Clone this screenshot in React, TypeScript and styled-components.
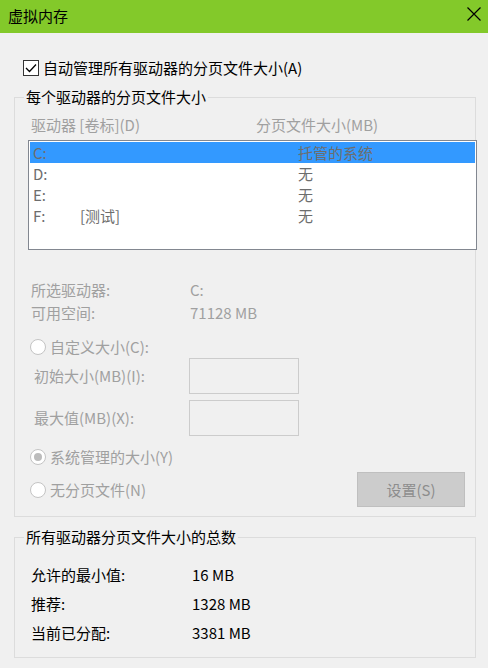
import styled, { createGlobalStyle } from 'styled-components';

const GlobalStyle = createGlobalStyle`
  html, body {
    margin: 0;
    padding: 0;
    background: #f0f0f0;
  }
  body {
    font-family: "Noto Sans CJK SC", "Noto Sans", sans-serif;
    font-size: 15px;
    color: #000;
  }
`;

const disabled = '#a0a0a0';

const Window = styled.div`
  width: 488px;
  height: 668px;
  background: #f0f0f0;
  display: flex;
  flex-direction: column;
  overflow: hidden;
`;

const TitleBar = styled.div`
  height: 33px;
  background: #83c92a;
  display: flex;
  align-items: center;
  justify-content: space-between;
  padding: 0 7px 0 8px;
  box-sizing: border-box;
`;

const Title = styled.span`
  font-size: 15px;
  line-height: 20px;
  margin-top: -1px;
`;

const CloseButton = styled.button`
  border: 0;
  background: none;
  padding: 0;
  width: 14px;
  height: 14px;
  display: flex;
  margin-top: -6px;
`;

const Body = styled.div`
  display: flex;
  flex-direction: column;
  padding: 0 12px 0 14px;
`;

const CheckRow = styled.label`
  display: flex;
  align-items: center;
  gap: 4px;
  height: 20px;
  margin: 25px 0 9px 9px;
  line-height: 20px;
`;

const CheckBox = styled.span`
  width: 16px;
  height: 16px;
  box-sizing: border-box;
  border: 1px solid #333;
  background: #fff;
  display: flex;
  align-items: center;
  justify-content: center;
`;

const Group = styled.fieldset<{ $bottom: number }>`
  margin: 0;
  border: 1px solid #dcdcdc;
  padding: 0 0 ${({ $bottom }) => $bottom}px 13px;
  display: flex;
  flex-direction: column;
  min-width: 0;
  & + & {
    margin-top: 10px;
  }
`;

const Legend = styled.legend`
  margin-left: -4px;
  padding: 0 2px;
  font-size: 15px;
  line-height: 20px;
`;

const HeaderRow = styled.div`
  display: flex;
  height: 20px;
  line-height: 20px;
  margin: 8px 0 5px 3px;
  color: ${disabled};
`;

const HeaderCell = styled.span<{ $w?: number }>`
  width: ${({ $w }) => ($w ? `${$w}px` : 'auto')};
`;

const List = styled.div`
  height: 110px;
  margin-right: -2px;
  box-sizing: border-box;
  border: 1px solid #828790;
  background: #fff;
  padding: 1px;
  display: flex;
  flex-direction: column;
`;

const ListRow = styled.div<{ $selected?: boolean }>`
  height: 21px;
  line-height: 21px;
  display: flex;
  padding-left: 3px;
  color: #6d6d6d;
  background: ${({ $selected }) => ($selected ? '#3399ff' : 'transparent')};
`;

const Cell = styled.span<{ $w?: number }>`
  width: ${({ $w }) => ($w ? `${$w}px` : 'auto')};
  flex-shrink: 0;
`;

const InfoRow = styled.div<{ $top: number }>`
  display: flex;
  height: 20px;
  line-height: 20px;
  margin: ${({ $top }) => $top}px 0 0 3px;
  color: ${disabled};
`;

const InfoLabel = styled.span`
  width: 159px;
`;

const RadioRow = styled.label<{ $top: number }>`
  display: flex;
  align-items: center;
  gap: 4px;
  height: 20px;
  line-height: 20px;
  margin: ${({ $top }) => $top}px 0 0 2px;
  color: ${disabled};
`;

const Radio = styled.span<{ $checked?: boolean }>`
  width: 16px;
  height: 16px;
  box-sizing: border-box;
  border-radius: 50%;
  border: 1px solid #c4c4c4;
  background: #fff;
  display: flex;
  align-items: center;
  justify-content: center;
  &::after {
    content: '';
    width: 8px;
    height: 8px;
    border-radius: 50%;
    background: ${({ $checked }) => ($checked ? '#bcbcbc' : 'transparent')};
  }
`;

const FieldRow = styled.div<{ $top: number }>`
  display: flex;
  align-items: center;
  margin: ${({ $top }) => $top}px 0 0 6px;
  color: ${disabled};
`;

const FieldLabel = styled.span`
  width: 155px;
  line-height: 20px;
`;

const SizeBox = styled.div`
  width: 110px;
  height: 36px;
  box-sizing: border-box;
  border: 1px solid #cccccc;
  background: #f0f0f0;
`;

const BottomRow = styled.div`
  display: flex;
  align-items: center;
  justify-content: space-between;
  margin-top: 5px;
  padding-right: 10px;
`;

const SetButton = styled.button`
  width: 108px;
  height: 35px;
  box-sizing: border-box;
  border: 1px solid #bfbfbf;
  background: #cccccc;
  color: #8d8d8d;
  font-family: inherit;
  font-size: 15px;
  padding: 0;
`;

const TotalRow = styled.div<{ $top: number }>`
  display: flex;
  height: 21px;
  line-height: 21px;
  margin: ${({ $top }) => $top}px 0 0 3px;
`;

const TotalLabel = styled.span`
  width: 161px;
`;

const drives = [
  { name: 'C:', label: '', size: '托管的系统', selected: true },
  { name: 'D:', label: '', size: '无' },
  { name: 'E:', label: '', size: '无' },
  { name: 'F:', label: '[测试]', size: '无' },
];

const totals = [
  { label: '允许的最小值:', value: '16 MB', top: 17 },
  { label: '推荐:', value: '1328 MB', top: 8 },
  { label: '当前已分配:', value: '3381 MB', top: 8 },
];

export default function App() {
  return (
    <>
      <GlobalStyle />
      <Window>
        <TitleBar>
          <Title>虚拟内存</Title>
          <CloseButton aria-label="关闭">
            <svg width="14" height="14" viewBox="0 0 14 14">
              <path d="M0.5 0.5 L13.5 13.5 M13.5 0.5 L0.5 13.5" stroke="#000" strokeWidth="1.2" fill="none" />
            </svg>
          </CloseButton>
        </TitleBar>
        <Body>
          <CheckRow>
            <CheckBox>
              <svg width="12" height="10" viewBox="0 0 12 10">
                <path d="M1 5 L4.5 8.5 L11 1.5" stroke="#000" strokeWidth="1.3" fill="none" />
              </svg>
            </CheckBox>
            自动管理所有驱动器的分页文件大小(A)
          </CheckRow>

          <Group $bottom={9}>
            <Legend>每个驱动器的分页文件大小</Legend>
            <HeaderRow>
              <HeaderCell $w={225}>驱动器 [卷标](D)</HeaderCell>
              <HeaderCell>分页文件大小(MB)</HeaderCell>
            </HeaderRow>
            <List>
              {drives.map((d) => (
                <ListRow key={d.name} $selected={d.selected}>
                  <Cell $w={47}>{d.name}</Cell>
                  <Cell $w={218}>{d.label}</Cell>
                  <Cell>{d.size}</Cell>
                </ListRow>
              ))}
            </List>
            <InfoRow $top={30}>
              <InfoLabel>所选驱动器:</InfoLabel>
              <span>C:</span>
            </InfoRow>
            <InfoRow $top={3}>
              <InfoLabel>可用空间:</InfoLabel>
              <span>71128 MB</span>
            </InfoRow>
            <RadioRow $top={14}>
              <Radio />
              自定义大小(C):
            </RadioRow>
            <FieldRow $top={1}>
              <FieldLabel>初始大小(MB)(I):</FieldLabel>
              <SizeBox />
            </FieldRow>
            <FieldRow $top={6}>
              <FieldLabel>最大值(MB)(X):</FieldLabel>
              <SizeBox />
            </FieldRow>
            <RadioRow $top={11}>
              <Radio $checked />
              系统管理的大小(Y)
            </RadioRow>
            <BottomRow>
              <RadioRow $top={0}>
                <Radio />
                无分页文件(N)
              </RadioRow>
              <SetButton disabled>设置(S)</SetButton>
            </BottomRow>
          </Group>

          <Group $bottom={14}>
            <Legend>所有驱动器分页文件大小的总数</Legend>
            {totals.map((t) => (
              <TotalRow key={t.label} $top={t.top}>
                <TotalLabel>{t.label}</TotalLabel>
                <span>{t.value}</span>
              </TotalRow>
            ))}
          </Group>
        </Body>
      </Window>
    </>
  );
}
